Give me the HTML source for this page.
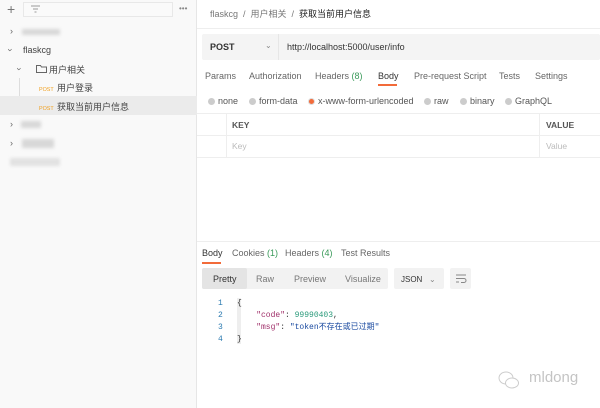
<!DOCTYPE html>
<html><head><meta charset="utf-8"><style>
*{margin:0;padding:0;box-sizing:border-box}
body{width:600px;height:408px;overflow:hidden;background:#fff;font-family:"Liberation Sans","Noto Sans CJK SC",sans-serif;font-size:9px;color:#333;position:relative}
.a{position:absolute;white-space:nowrap}
.side{left:0;top:0;width:197px;height:408px;background:#f9f9f9;border-right:1px solid #e6e6e6}
.blur{background:#d8d8d8;filter:blur(1.5px)}
.mono{font-family:"Liberation Mono","Noto Sans CJK SC",monospace;font-size:8px}
.r{display:inline-block;width:7px;height:7px;border-radius:50%;background:#ccc;vertical-align:-1px;margin-right:3px}
.post{display:inline-block;font-size:6px;color:#f0a020;width:18px;transform:scale(.9);transform-origin:left center}
</style></head><body>
<div class="a side">
 <div class="a" style="left:7px;top:1px;font-size:14px;color:#777">+</div>
 <div class="a" style="left:23px;top:2px;width:150px;height:15px;border:1px solid #e8e8e8;background:#fafafa"></div>
 <svg class="a" style="left:30px;top:5px" width="11" height="8"><path d="M1 1h9M3 4h5M4.5 7h2" stroke="#999"/></svg>
 <div class="a" style="left:179px;top:4px;font-size:8px;color:#888">•••</div>
 <div class="a" style="left:10px;top:26px;color:#666">›</div>
 <div class="a blur" style="left:22px;top:29px;width:38px;height:6px"></div>
 <div class="a" style="left:9px;top:45px;color:#666;transform:rotate(90deg)">›</div>
 <div class="a" style="left:23px;top:45px;color:#444">flaskcg</div>
 <div class="a" style="left:18px;top:64px;color:#666;transform:rotate(90deg)">›</div>
 <svg class="a" style="left:36px;top:64px" width="11" height="9"><path d="M.5 1.5h4l1 1.5h5v5.5H.5z" fill="none" stroke="#666"/></svg>
 <div class="a" style="left:49px;top:63px;color:#444">用户相关</div>
 <div class="a" style="left:19px;top:78px;width:1px;height:36px;background:#ddd"></div>
 <div class="a" style="left:39px;top:81px;color:#444"><span class="post">POST</span>用户登录</div>
 <div class="a" style="left:0;top:96px;width:197px;height:19px;background:#ebebeb"></div>
 <div class="a" style="left:39px;top:100px;color:#444"><span class="post">POST</span>获取当前用户信息</div>
 <div class="a" style="left:10px;top:119px;color:#666">›</div>
 <div class="a blur" style="left:21px;top:121px;width:20px;height:7px"></div>
 <div class="a" style="left:10px;top:138px;color:#666">›</div>
 <div class="a blur" style="left:22px;top:139px;width:32px;height:9px"></div>
 <div class="a blur" style="left:10px;top:158px;width:50px;height:8px;opacity:.7"></div>
</div>
<div class="a" style="left:210px;top:7px;color:#777">flaskcg &nbsp;/ &nbsp;用户相关 &nbsp;/ &nbsp;<span style="color:#222">获取当前用户信息</span></div>
<div class="a" style="left:197px;top:28px;width:403px;height:1px;background:#eee"></div>
<div class="a" style="left:202px;top:34px;width:398px;height:26px;background:#f4f4f4;border-radius:2px"></div>
<div class="a" style="left:278px;top:34px;width:1px;height:26px;background:#e6e6e6"></div>
<div class="a" style="left:210px;top:42px;font-weight:bold;color:#333">POST</div>
<div class="a" style="left:265px;top:41px;color:#888;font-size:8px">⌄</div>
<div class="a" style="left:287px;top:42px;color:#333">http://localhost:5000/user/info</div>
<div class="a" style="left:205px;top:71px;color:#666">Params</div>
<div class="a" style="left:249px;top:71px;color:#666">Authorization</div>
<div class="a" style="left:315px;top:71px;color:#666">Headers <span style="color:#3a9a5a">(8)</span></div>
<div class="a" style="left:378px;top:71px;color:#333">Body</div>
<div class="a" style="left:378px;top:84px;width:19px;height:2px;background:#f26b3a"></div>
<div class="a" style="left:414px;top:71px;color:#666">Pre-request Script</div>
<div class="a" style="left:499px;top:71px;color:#666">Tests</div>
<div class="a" style="left:535px;top:71px;color:#666">Settings</div>
<div class="a" style="left:208px;top:96px;color:#555"><span class="r"></span>none</div>
<div class="a" style="left:249px;top:96px;color:#555"><span class="r"></span>form-data</div>
<div class="a" style="left:308px;top:96px;color:#555"><span class="r" style="background:#f26b3a;border:1.5px solid #ddd"></span>x-www-form-urlencoded</div>
<div class="a" style="left:424px;top:96px;color:#555"><span class="r"></span>raw</div>
<div class="a" style="left:460px;top:96px;color:#555"><span class="r"></span>binary</div>
<div class="a" style="left:505px;top:96px;color:#555"><span class="r"></span>GraphQL</div>
<div class="a" style="left:197px;top:113px;width:403px;height:1px;background:#eee"></div>
<div class="a" style="left:197px;top:135px;width:403px;height:1px;background:#eee"></div>
<div class="a" style="left:197px;top:157px;width:403px;height:1px;background:#eee"></div>
<div class="a" style="left:226px;top:113px;width:1px;height:44px;background:#eee"></div>
<div class="a" style="left:539px;top:113px;width:1px;height:44px;background:#eee"></div>
<div class="a" style="left:232px;top:120px;font-weight:bold;color:#555;font-size:8.5px">KEY</div>
<div class="a" style="left:546px;top:120px;font-weight:bold;color:#555;font-size:8.5px">VALUE</div>
<div class="a" style="left:232px;top:141px;color:#bbb;font-size:8.5px">Key</div>
<div class="a" style="left:546px;top:141px;color:#bbb;font-size:8.5px">Value</div>
<div class="a" style="left:197px;top:241px;width:403px;height:1px;background:#eee"></div>
<div class="a" style="left:202px;top:248px;color:#333">Body</div>
<div class="a" style="left:202px;top:262px;width:19px;height:2px;background:#f26b3a"></div>
<div class="a" style="left:232px;top:248px;color:#666">Cookies <span style="color:#3a9a5a">(1)</span></div>
<div class="a" style="left:285px;top:248px;color:#666">Headers <span style="color:#3a9a5a">(4)</span></div>
<div class="a" style="left:341px;top:248px;color:#666">Test Results</div>
<div class="a" style="left:202px;top:268px;width:186px;height:21px;background:#f2f2f2;border-radius:2px"></div>
<div class="a" style="left:202px;top:268px;width:45px;height:21px;background:#e4e4e4;border-radius:2px"></div>
<div class="a" style="left:213px;top:274px;color:#333">Pretty</div>
<div class="a" style="left:256px;top:274px;color:#777">Raw</div>
<div class="a" style="left:294px;top:274px;color:#777">Preview</div>
<div class="a" style="left:345px;top:274px;color:#777">Visualize</div>
<div class="a" style="left:394px;top:268px;width:50px;height:21px;background:#f2f2f2;border-radius:2px"></div>
<div class="a" style="left:401px;top:275px;color:#333;font-size:8px">JSON &nbsp;&nbsp;<span style="color:#888">⌄</span></div>
<div class="a" style="left:450px;top:268px;width:21px;height:21px;background:#f2f2f2;border-radius:2px"></div>
<svg class="a" style="left:455px;top:274px" width="12" height="10"><path d="M1 1h10M1 4.5h8a2 2 0 0 1 0 4H6M1 8h3" stroke="#888" fill="none"/></svg>
<div class="a" style="left:237px;top:298px;width:4px;height:46px;background:#eee"></div>
<div class="a mono" style="left:218px;top:298px;line-height:12px;color:#2a7ab0">1<br>2<br>3<br>4</div>
<div class="a mono" style="left:237px;top:298px;line-height:12px;color:#333">{<br>&nbsp;&nbsp;&nbsp;&nbsp;<span style="color:#a0306a">"code"</span>: <span style="color:#2a9a7a">99990403</span>,<br>&nbsp;&nbsp;&nbsp;&nbsp;<span style="color:#a0306a">"msg"</span>: <span style="color:#1a4aa0">"token不存在或已过期"</span><br>}</div>
<svg class="a" style="left:498px;top:370px" width="22" height="20"><ellipse cx="8" cy="8" rx="7" ry="6" fill="none" stroke="#ccc"/><ellipse cx="14" cy="13" rx="6.5" ry="5" fill="#fff" stroke="#ccc"/></svg>
<div class="a" style="left:529px;top:369px;font-size:15px;color:#c4c4c4">mldong</div>
</body></html>
